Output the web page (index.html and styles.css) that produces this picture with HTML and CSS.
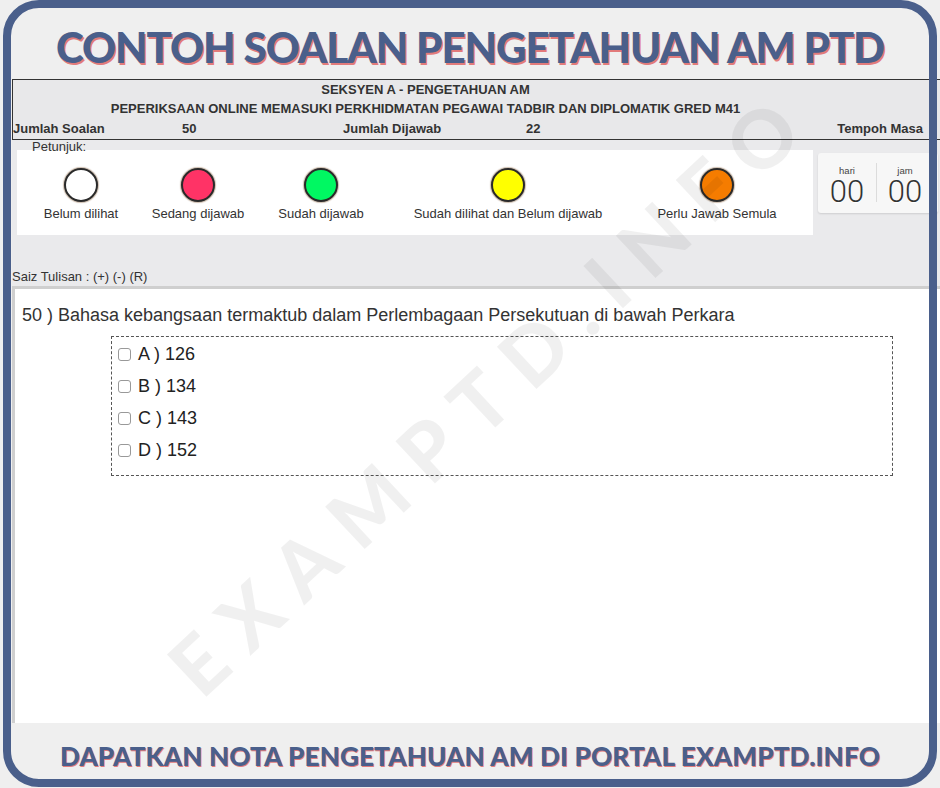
FILE: index.html
```html
<!DOCTYPE html>
<html>
<head>
<meta charset="utf-8">
<title>Contoh Soalan Pengetahuan AM PTD</title>
<link rel="stylesheet" href="styles.css">
</head>
<body>
<div class="page">
  <h1 class="title">CONTOH SOALAN PENGETAHUAN AM PTD</h1>
  <div class="exam">
    <div class="exam-head">
      <div class="head-row head-center">SEKSYEN A - PENGETAHUAN AM</div>
      <div class="head-row head-center">PEPERIKSAAN ONLINE MEMASUKI PERKHIDMATAN PEGAWAI TADBIR DAN DIPLOMATIK GRED M41</div>
      <div class="head-row head-stats">
        <span>Jumlah Soalan</span><span>50</span><span>Jumlah Dijawab</span><span>22</span><span>Tempoh Masa</span>
      </div>
    </div>
    <div class="mid">
      <div class="legend-col">
        <div class="legend-label">Petunjuk:</div>
        <div class="legend-box">
          <div class="item"><span class="dot dot-white"></span><span class="lbl">Belum dilihat</span></div>
          <div class="item"><span class="dot dot-red"></span><span class="lbl">Sedang dijawab</span></div>
          <div class="item"><span class="dot dot-green"></span><span class="lbl">Sudah dijawab</span></div>
          <div class="item"><span class="dot dot-yellow"></span><span class="lbl">Sudah dilihat dan Belum dijawab</span></div>
          <div class="item"><span class="dot dot-orange"></span><span class="lbl">Perlu Jawab Semula</span></div>
        </div>
      </div>
      <div class="timer">
        <div class="unit unit-day"><span class="unit-lbl">hari</span><span class="unit-num">00</span></div>
        <div class="divider"></div>
        <div class="unit unit-hour"><span class="unit-lbl">jam</span><span class="unit-num">00</span></div>
      </div>
    </div>
    <div class="font-size">Saiz Tulisan : (+) (-) (R)</div>
    <div class="question-area">
      <p class="question">50 ) Bahasa kebangsaan termaktub dalam Perlembagaan Persekutuan di bawah Perkara</p>
      <div class="options">
        <label class="opt"><span class="cb"></span>A ) 126</label>
        <label class="opt"><span class="cb"></span>B ) 134</label>
        <label class="opt"><span class="cb"></span>C ) 143</label>
        <label class="opt"><span class="cb"></span>D ) 152</label>
      </div>
    </div>
  </div>
  <div class="footer">DAPATKAN NOTA PENGETAHUAN AM DI PORTAL EXAMPTD.INFO</div>
  <div class="watermark">EXAMPTD.INFO</div>
  <div class="frame"></div>
</div>
</body>
</html>
```

FILE: styles.css
```css
* { box-sizing: border-box; }

body {
  margin: 0;
  width: 940px;
  height: 788px;
  overflow: hidden;
  background: #efefef;
  font-family: "Liberation Sans", Arial, sans-serif;
  color: #333;
}

.page {
  position: relative;
  width: 940px;
  height: 788px;
}

.title {
  margin: 0;
  height: 79px;
  padding-top: 26px;
  text-align: center;
  font-family: Lato, "Open Sans", sans-serif;
  font-weight: 900;
  font-size: 42px;
  letter-spacing: -1px;
  line-height: 1;
  color: #4a5f8b;
  text-shadow: 1.5px 1.5px 0 #e27b7b;
  white-space: nowrap;
}

.exam {
  margin-left: 12px;
  background: #eaeaec;
}

.exam-head {
  border-top: 1px solid #333;
  border-bottom: 1px solid #333;
  border-left: 1px solid #333;
  background: #e8e8ea;
  font-weight: bold;
  font-size: 13px;
  color: #333;
}

.head-row {
  height: 20px;
  line-height: 20px;
  white-space: nowrap;
}

.head-row:first-child {
  height: 19px;
  line-height: 19px;
}

.head-center {
  width: 825px;
  text-align: center;
}

.head-stats {
  display: grid;
  grid-template-columns: 169px 161px 183px 1fr auto;
  padding-right: 17px;
}

.mid {
  display: flex;
  align-items: flex-start;
  height: 131px;
}

.legend-col {
  margin-left: 5px;
  width: 796px;
}

.legend-label {
  height: 9px;
  margin-top: 1px;
  margin-left: 15px;
  font-size: 13px;
  line-height: 12px;
  color: #333;
}

.legend-box {
  display: grid;
  grid-template-columns: 128px 106px 140px 234px 184px;
  height: 85px;
  background: #fff;
}

.item {
  display: flex;
  flex-direction: column;
  align-items: center;
}

.dot {
  display: block;
  width: 34px;
  height: 34px;
  margin-top: 18px;
  border-radius: 50%;
  border: 2px solid #2a2a2a;
  box-shadow: 0 0 1px 1px rgba(140, 105, 70, 0.45);
}

.dot-white { background: #fff; }
.dot-red { background: #ff3366; }
.dot-green { background: #00f862; }
.dot-yellow { background: #ffff00; }
.dot-orange { background: #f57c00; }

.lbl {
  margin-top: 5px;
  font-size: 13px;
  line-height: 14px;
  white-space: nowrap;
  color: #333;
}

.timer {
  display: flex;
  margin-left: 5px;
  margin-top: 13px;
  width: 120px;
  height: 60px;
  background: #f7f7f7;
  border-radius: 3px;
  box-shadow: 0 1px 2px rgba(0, 0, 0, 0.12);
}

.unit {
  display: flex;
  flex-direction: column;
  align-items: center;
  padding-top: 13px;
}

.unit-day { width: 58px; }
.unit-hour { width: 56px; }

.unit-lbl {
  font-size: 9.5px;
  line-height: 10px;
  color: #444;
}

.unit-num {
  font-family: Roboto, "Liberation Sans", sans-serif;
  font-weight: 300;
  font-size: 31px;
  line-height: 31px;
  color: #333;
  text-shadow: 0 1px 0 #fff;
}

.divider {
  width: 1px;
  height: 39px;
  margin-top: 10px;
  background: #dcdcdc;
}

.font-size {
  height: 15px;
  font-size: 13px;
  line-height: 12px;
  color: #333;
}

.question-area {
  height: 437px;
  border-top: 3px solid #cfcfcf;
  border-left: 3px solid #cfcfcf;
  background: #fff;
  padding-top: 16px;
}

.question {
  margin: 0;
  padding-left: 7px;
  font-size: 18px;
  line-height: 20px;
  color: #333;
  white-space: nowrap;
}

.options {
  margin-top: 11px;
  margin-left: 96px;
  width: 782px;
  height: 140px;
  border: 1px dashed #555;
  padding: 1px 0 0 6px;
}

.opt {
  display: flex;
  align-items: center;
  height: 32px;
  font-size: 18px;
  color: #222;
}

.cb {
  display: block;
  width: 13px;
  height: 13px;
  margin-right: 7px;
  border: 1px solid #999;
  border-radius: 3px;
  background: #fff;
}

.footer {
  height: 65px;
  padding-top: 20px;
  text-align: center;
  font-family: Lato, "Open Sans", sans-serif;
  font-weight: 900;
  font-size: 26px;
  letter-spacing: 0.2px;
  line-height: 26px;
  color: #4a5f8b;
  text-shadow: 1px 1px 0 #e27b7b;
  white-space: nowrap;
}

.watermark {
  position: absolute;
  left: 490px;
  top: 390px;
  transform: translate(-50%, -50%) rotate(-43deg);
  font-family: Lato, sans-serif;
  font-weight: 900;
  font-size: 80px;
  letter-spacing: 20px;
  color: rgba(0, 0, 0, 0.06);
  white-space: nowrap;
  pointer-events: none;
}

.frame {
  position: absolute;
  left: 3px;
  top: 0;
  width: 934px;
  height: 787px;
  border: 8px solid #4a5f8b;
  border-radius: 36px;
  pointer-events: none;
}
```
